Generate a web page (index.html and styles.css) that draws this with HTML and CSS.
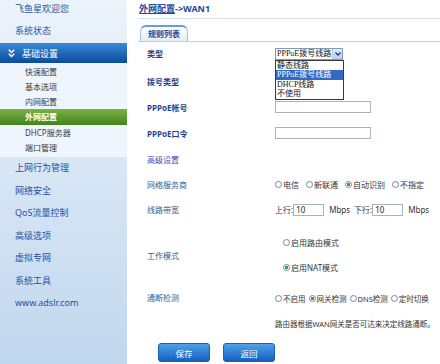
FILE: index.html
```html
<!DOCTYPE html>
<html lang="zh-CN">
<head>
<meta charset="utf-8">
<title>外网配置</title>
<link rel="stylesheet" href="styles.css">
</head>
<body>
<div class="layout">
  <nav class="sidebar">
    <div class="nav-item nav-welcome">飞鱼星欢迎您</div>
    <div class="nav-item nav-status">系统状态</div>
    <div class="nav-group-head">
      <svg class="chev" width="7" height="9" viewBox="0 0 7 9"><polyline points="0.8,0.8 3.5,3.5 6.2,0.8" fill="none" stroke="#fff" stroke-width="1.5"/><polyline points="0.8,4.8 3.5,7.5 6.2,4.8" fill="none" stroke="#fff" stroke-width="1.5"/></svg>
      <span>基础设置</span>
    </div>
    <ul class="subnav">
      <li>快速配置</li>
      <li>基本选项</li>
      <li>内网配置</li>
      <li class="active">外网配置</li>
      <li>DHCP服务器</li>
      <li>端口管理</li>
    </ul>
    <div class="nav-item">上网行为管理</div>
    <div class="nav-item">网络安全</div>
    <div class="nav-item">QoS流量控制</div>
    <div class="nav-item">高级选项</div>
    <div class="nav-item">虚拟专网</div>
    <div class="nav-item">系统工具</div>
    <div class="nav-item">www.adslr.com</div>
  </nav>
  <main class="content">
    <h1 class="page-title"><a class="crumb">外网配置</a>-&gt;WAN1</h1>
    <div class="tabs"><span class="tab">规则列表</span></div>
    <div class="form">
      <div class="row row-first">
        <div class="label strong">类型</div>
        <div class="ctrl">
          <div class="select-wrap">
            <div class="select">
              <span class="select-value">PPPoE拨号线路</span>
              <span class="select-btn"><svg width="6" height="4" viewBox="0 0 6 4"><polyline points="0.5,0.5 3,3 5.5,0.5" fill="none" stroke="#1d3a78" stroke-width="1.3"/></svg></span>
            </div>
            <ul class="select-list">
              <li>静态线路</li>
              <li class="hl">PPPoE拨号线路</li>
              <li>DHCP线路</li>
              <li>不使用</li>
            </ul>
          </div>
        </div>
      </div>
      <div class="row">
        <div class="label strong">拨号类型</div>
      </div>
      <div class="row">
        <div class="label strong">PPPoE帐号</div>
        <div class="ctrl"><span class="input"></span></div>
      </div>
      <div class="row">
        <div class="label strong">PPPoE口令</div>
        <div class="ctrl"><span class="input"></span></div>
      </div>
      <div class="row">
        <div class="label link">高级设置</div>
      </div>
      <div class="row row-short">
        <div class="label plain">网络服务商</div>
        <div class="ctrl radios">
          <span class="opt"><span class="dot"></span>电信</span>
          <span class="opt"><span class="dot"></span>新联通</span>
          <span class="opt"><span class="dot on"></span>自动识别</span>
          <span class="opt"><span class="dot"></span>不指定</span>
        </div>
      </div>
      <div class="row row-short">
        <div class="label plain">线路带宽</div>
        <div class="ctrl">
          <span>上行:</span><span class="input small">10</span><span class="unit">Mbps</span>
          <span class="down">下行:</span><span class="input small">10</span><span class="unit">Mbps</span>
        </div>
      </div>
      <div class="row row-mode">
        <div class="label plain">工作模式</div>
        <div class="ctrl-stack indent">
          <div class="line"><span class="opt"><span class="dot"></span>启用路由模式</span></div>
          <div class="line"><span class="opt"><span class="dot on"></span>启用NAT模式</span></div>
        </div>
      </div>
      <div class="row row-detect">
        <div class="label plain">通断检测</div>
        <div class="ctrl-stack compact">
          <div class="line line-a radios tight">
            <span class="opt"><span class="dot"></span>不启用</span>
            <span class="opt"><span class="dot on"></span>网关检测</span>
            <span class="opt"><span class="dot"></span>DNS检测</span>
            <span class="opt"><span class="dot"></span>定时切换</span>
          </div>
          <div class="line line-b">路由器根据WAN网关是否可达来决定线路通断。</div>
        </div>
      </div>
      <div class="actions">
        <button class="btn" type="button">保存</button>
        <button class="btn" type="button">返回</button>
      </div>
    </div>
  </main>
</div>
</body>
</html>
```
FILE: styles.css
```css
html, body {
  margin: 0;
  padding: 0;
}
body {
  font-family: "Noto Sans", "Noto Sans CJK SC", sans-serif;
  font-size: 8px;
  background: #ffffff;
  color: #333333;
}
.layout {
  display: flex;
  min-height: 364px;
}

/* sidebar */
.sidebar {
  width: 127px;
  flex: none;
  background: linear-gradient(#ecf3fb, #c1d7ee);
}
.nav-item {
  height: 22.5px;
  line-height: 22.5px;
  padding-left: 15px;
  font-size: 9px;
  color: #2553a2;
  white-space: nowrap;
}
.nav-welcome {
  height: 18px;
  line-height: 18px;
}
.nav-status {
  height: 25px;
  line-height: 25px;
}
.nav-group-head {
  height: 20px;
  display: flex;
  align-items: center;
  gap: 7px;
  padding-left: 8px;
  background: linear-gradient(#3a89d8, #0b4b9b);
  color: #ffffff;
  font-size: 9px;
}
.chev {
  display: block;
}
.subnav {
  list-style: none;
  margin: 0;
  padding: 1px 0 2px;
  background: #eef5fc;
}
.subnav li {
  height: 15px;
  line-height: 15px;
  padding-left: 25px;
  font-size: 8px;
  color: #3a3a3a;
}
.subnav li.active {
  height: 16px;
  line-height: 16px;
  background: linear-gradient(#7ab244, #43831d);
  color: #ffffff;
  font-weight: bold;
}

/* content */
.content {
  flex: 1;
  min-width: 0;
  padding-left: 11px;
}
.page-title {
  margin: 0;
  height: 18px;
  line-height: 18px;
  padding-left: 1px;
  font-size: 9px;
  font-weight: bold;
  color: #1c4a9a;
  border-bottom: 1px solid #d2dfec;
}
.crumb {
  color: inherit;
  text-decoration: underline;
}
.tabs {
  margin-top: 6px;
  height: 16px;
  display: flex;
  align-items: flex-end;
  padding-left: 2px;
  border-bottom: 1px solid #bdd2ea;
}
.tab {
  width: 48px;
  height: 16px;
  box-sizing: border-box;
  border: 1px solid #a3c0e2;
  border-top: 2px solid #6d9bd4;
  border-bottom: none;
  border-radius: 6px 6px 0 0;
  background: linear-gradient(#ffffff, #e3edf9);
  text-align: center;
  line-height: 14px;
  font-weight: bold;
  color: #1f4291;
}

.form {
  padding-left: 9px;
}
.row {
  display: flex;
  align-items: center;
  height: 26px;
  box-sizing: border-box;
}
.row-first {
  padding-bottom: 3px;
}
.row-short {
  height: 25px;
}
.label {
  width: 128px;
  flex: none;
}
.label.strong {
  font-weight: bold;
  color: #1f3f90;
}
.label.plain {
  color: #3d5b8c;
}
.label.link {
  color: #4a4ab4;
}
.ctrl {
  display: flex;
  align-items: center;
  color: #333333;
  white-space: nowrap;
}
.radios {
  display: flex;
  align-items: center;
  gap: 7px;
  white-space: nowrap;
}
.radios.tight {
  gap: 3px;
}
.opt {
  display: inline-flex;
  align-items: center;
  gap: 1px;
  color: #333333;
  white-space: nowrap;
}
.dot {
  width: 7px;
  height: 7px;
  flex: none;
  box-sizing: border-box;
  border: 1px solid #7d858f;
  border-radius: 50%;
  background: #ffffff;
}
.dot.on {
  background: radial-gradient(circle, #22a03c 0, #22a03c 1.3px, #ffffff 1.9px);
}

/* select */
.select-wrap {
  position: relative;
}
.select {
  width: 68px;
  height: 12px;
  box-sizing: border-box;
  border: 1px solid #7f9db9;
  display: flex;
  background: #ffffff;
  font-family: "Liberation Serif", "Noto Sans CJK SC", serif;
  font-size: 8px;
  line-height: 10px;
  color: #111111;
}
.select-value {
  flex: 1;
  padding-left: 1px;
  white-space: nowrap;
}
.select-btn {
  width: 9px;
  flex: none;
  display: flex;
  align-items: center;
  justify-content: center;
  background: linear-gradient(#e3ebf8, #b8ccee);
  border-left: 1px solid #b5c7e6;
}
.select-list {
  position: absolute;
  top: 12px;
  left: 0;
  width: 69px;
  box-sizing: border-box;
  margin: 0;
  padding: 0;
  list-style: none;
  border: 1px solid #3a3a3a;
  background: #ffffff;
  font-family: "Liberation Serif", "Noto Sans CJK SC", serif;
  font-size: 8px;
  line-height: 9.5px;
  color: #111111;
  z-index: 2;
}
.select-list li {
  height: 9.5px;
  padding-left: 1px;
  white-space: nowrap;
}
.select-list li.hl {
  background: #3169c6;
  color: #ffffff;
}

/* inputs */
.input {
  display: block;
  width: 96px;
  height: 12px;
  box-sizing: border-box;
  border: 1px solid #a9b4c2;
  background: #ffffff;
}
.input.small {
  width: 31px;
  padding-left: 2px;
  line-height: 10px;
  color: #222222;
}
.unit {
  margin-left: 5px;
}
.down {
  margin-left: 4px;
}

/* stacked controls */
.row-mode {
  height: 64px;
  padding: 8px 0 6px;
}
.ctrl-stack {
  display: flex;
  flex-direction: column;
  flex: none;
  white-space: nowrap;
}
.ctrl-stack.indent {
  padding-left: 8px;
}
.ctrl-stack.compact {
  font-size: 7.5px;
}
.line {
  height: 25px;
  display: flex;
  align-items: center;
  white-space: nowrap;
}
.row-detect {
  height: 50px;
  align-items: flex-start;
}
.row-detect .label {
  line-height: 24px;
}
.line-a {
  height: 24px;
}
.line-b {
  height: 26px;
  color: #333333;
}

/* buttons */
.actions {
  display: flex;
  gap: 13px;
  margin-top: 7px;
  padding-left: 11px;
}
.btn {
  width: 52px;
  height: 19px;
  box-sizing: border-box;
  padding: 0;
  border: 1px solid #1d5eae;
  border-radius: 3px;
  background: linear-gradient(#4fa1e9, #1360bf);
  color: #ffffff;
  font-family: "Noto Sans", "Noto Sans CJK SC", sans-serif;
  font-size: 8.5px;
}
```
